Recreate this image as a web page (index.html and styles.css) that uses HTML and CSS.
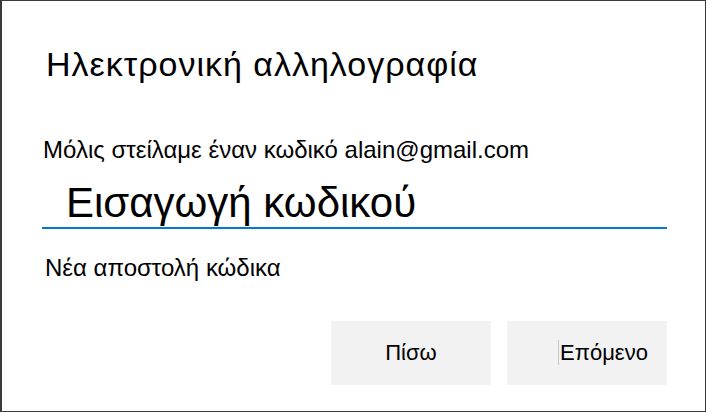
FILE: index.html
```html
<!DOCTYPE html>
<html lang="el">
<head>
<meta charset="utf-8">
<title>Ηλεκτρονική αλληλογραφία</title>
<link rel="stylesheet" href="styles.css">
</head>
<body>
<div class="dialog">
  <h1 class="title">Ηλεκτρονική αλληλογραφία</h1>
  <p class="sent">Μόλις στείλαμε έναν κωδικό alain@gmail.com</p>
  <div class="code-input">Εισαγωγή κωδικού</div>
  <a class="resend">Νέα αποστολή κώδικα</a>
  <div class="actions">
    <button class="btn">Πίσω</button>
    <button class="btn btn-next"><span class="caret">Επόμενο</span></button>
  </div>
</div>
</body>
</html>
```
FILE: styles.css
```css
* { box-sizing: border-box; }
html, body {
  margin: 0;
  padding: 0;
  background: #fff;
}
body {
  font-family: "Liberation Sans", Arial, sans-serif;
  color: #000;
}
.dialog {
  width: 706px;
  height: 412px;
  border: 1px solid #3a3a3a;
  border-left-width: 2px;
  padding: 45px 38px 0 40px;
  display: flex;
  flex-direction: column;
}
.title {
  margin: 0 0 0 4px;
  font-size: 34px;
  line-height: 36px;
  letter-spacing: 1px;
  font-weight: normal;
}
.sent {
  margin: 54px 0 0 1px;
  font-size: 24px;
  line-height: 28px;
}
.code-input {
  margin-top: 15px;
  height: 50px;
  font-size: 42px;
  line-height: 48px;
  padding-left: 24px;
  border-bottom: 2px solid #0078d4;
}
.resend {
  margin: 25px 0 0 3px;
  font-size: 24px;
  line-height: 28px;
  color: #000;
  text-decoration: none;
}
.actions {
  margin-top: auto;
  margin-bottom: 26px;
  display: flex;
  justify-content: flex-end;
  gap: 16px;
}
.btn {
  width: 160px;
  height: 64px;
  border: none;
  background: #f2f2f2;
  font-family: "Liberation Sans", Arial, sans-serif;
  font-size: 22px;
  color: #000;
  padding: 0;
}
.btn-next {
  padding-left: 32px;
}
.caret {
  border-left: 1px solid #c8c8c8;
  padding-left: 1px;
}
```
